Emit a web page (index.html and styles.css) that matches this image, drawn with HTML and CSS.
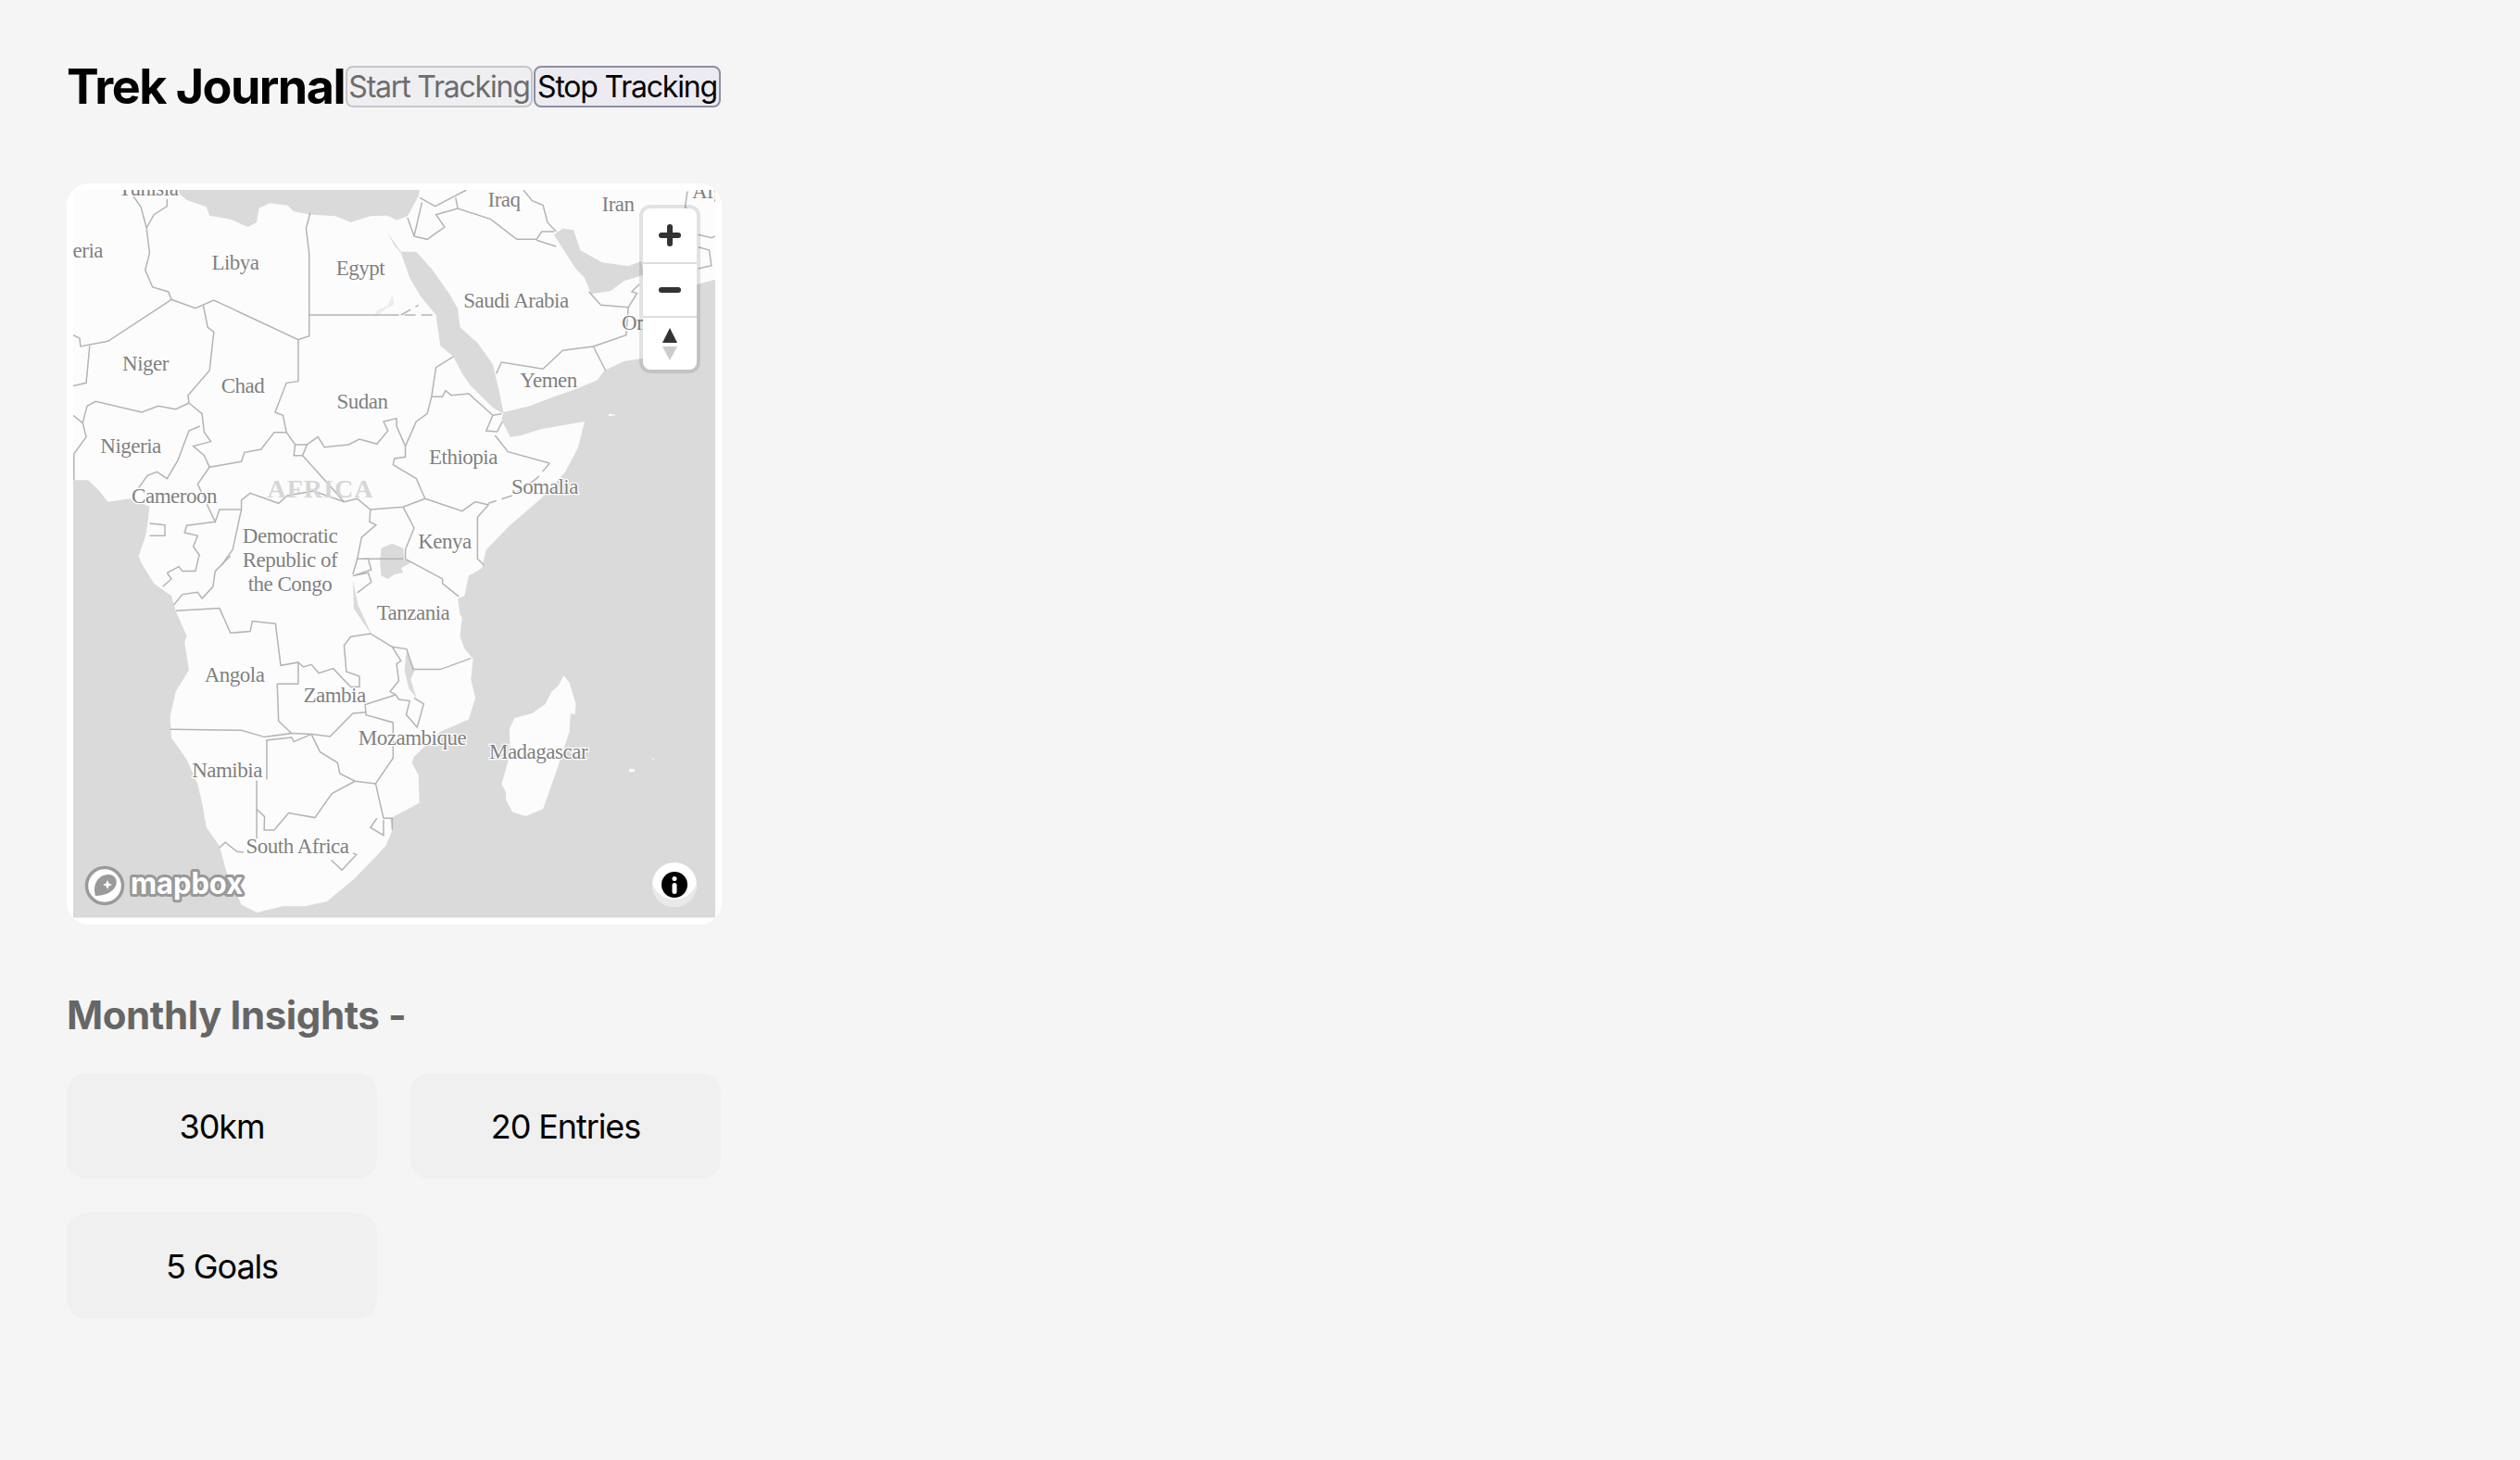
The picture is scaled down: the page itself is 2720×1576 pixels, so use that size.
FILE: index.html
```html
<!DOCTYPE html>
<html lang="en">
<head>
<meta charset="utf-8">
<title>Trek Journal</title>
<link rel="stylesheet" href="styles.css">
</head>
<body>
<main class="page">
  <header class="header">
    <h1 class="title">Trek Journal</h1>
    <button class="track-btn" disabled>Start Tracking</button>
    <button class="track-btn">Stop Tracking</button>
  </header>

  <section class="map-card">
    <div class="map">
      <svg class="map-svg" viewBox="79 205 693 786" width="693" height="786">
        <rect class="land" x="79" y="205" width="693" height="786"/>
        <g transform="translate(60,190) scale(.4719,.3333)">
          <path class="water" d="M280 45L285 60 300 78 345 100 352 128 400 140 440 165 460 150 465 105 490 88 530 95 545 115 585 125 640 130 675 150 720 130 760 128 780 143 805 130 830 65 833 45Z"/>
          <path class="water" d="M760 185L790 245 825 245 860 300 900 380 920 430 925 490 965 540 1000 610 1005 640 1015 700 1025 770 1000 750 950 680 930 640 910 585 880 550 870 450 835 390 810 330 790 250 775 225Z"/>
          <path class="water" d="M1140 190L1160 170 1185 175 1200 240 1250 280 1310 292 1340 275 1345 320 1300 340 1270 372 1225 382 1210 330 1190 300 1185 290Z"/>
          <path class="water" d="M1509 335L1470 350 1400 360 1345 590 1300 600 1255 630 1240 660 1190 690 1130 720 1085 745 1025 765 1020 790 1040 845 1065 840 1110 820 1170 805 1210 795 1195 880 1165 960 1110 1045 1040 1130 985 1210 975 1270 945 1295 935 1360 920 1370 925 1420 930 1430 925 1490 935 1530 955 1565 950 1630 960 1690 945 1760 880 1800 820 1880 815 1900 830 1940 832 2030 800 2055 765 2080 770 2120 755 2170 725 2215 680 2280 620 2350 570 2365 520 2365 460 2385 425 2360 390 2250 375 2170 345 2110 335 2030 325 1970 300 1890 265 1820 262 1750 275 1670 305 1600 295 1510 300 1490 275 1410 265 1360 225 1320 195 1250 190 1230 205 1170 210 1130 215 1070 170 1045 120 1055 100 1020 75 985 40 985 40 2402 1509 2402Z"/>
          <path class="water" d="M745 1205L770 1190 795 1205 797 1240 815 1250 790 1270 795 1285 775 1290 760 1305 745 1295 742 1250Z"/>
          <path class="water" d="M680 1310L692 1390 724 1488 705 1450 682 1400Z"/>
          <path class="water" d="M803 1535L822 1600 812 1630 826 1692 808 1660 798 1600Z"/>
          <path class="lake" d="M770 385L775 415 755 430 730 460 735 435 760 420Z"/>
          <path class="land" d="M1162 1618L1175 1640 1190 1710 1188 1745 1178 1740 1175 1800 1145 1930 1115 2050 1075 2073 1045 2060 1030 2020 1030 1995 1020 1970 1040 1870 1038 1790 1050 1755 1090 1740 1120 1710 1135 1670 1150 1650Z"/>
          <path class="land" d="M1312 1920h12v10h-12zM1364 1890l6 -8 -2 10zM1265 770l20 4 -20 4z"/>

          <g class="borders">
            <path d="M175 60L195 100 208 168 215 250 205 305 222 360 258 375 265 400 320 428 362 402 555 530 580 518 580 250 573 170 582 120"/>
            <path d="M255 75V98L225 125 208 168"/>
            <path d="M580 450H760"/>
            <path class="dash" d="M760 450H870M790 450L830 418"/>
            <path d="M265 400L120 535 57 552 55 525 40 515M78 550L70 670 40 680"/>
            <path d="M338 420L348 490 362 505 352 630 303 710 305 735 275 755 235 745 197 765 92 730 72 745 62 800 70 845 42 900V985M40 775L62 800"/>
            <path d="M555 530V665L528 670 502 765 520 775 528 830 500 830 470 885 432 895 425 925 352 943 340 905 315 875 355 860 340 830 335 770 305 735"/>
            <path d="M330 810L305 825 280 920 255 980 232 958 210 970 190 1010"/>
            <path d="M352 943L325 998 345 1060 365 1120 375 1080H425V1050L445 1027 510 1060 530 1035 590 1020 660 1055 690 1045 720 1080 795 1072 845 1045"/>
            <path d="M528 830L548 870 545 905H565L575 870 548 870M565 905L660 1055"/>
            <path d="M575 870L600 845 615 878 670 870 695 852 735 868 760 825 750 795 780 785 780 810 800 875V910L775 915 772 935 825 980 845 1045"/>
            <path d="M800 875L825 795 850 770 860 715H885L892 695 905 710 945 705 1000 775 1020 770M910 585L870 620 860 715"/>
            <path d="M1000 775L985 825 1010 828 1022 795M1005 840L1035 893 1130 930"/>
            <path class="dash" d="M1130 930L1100 980 1045 1035 990 1060"/>
            <path d="M845 1045L930 1085 960 1055 990 1065 965 1105V1240L980 1260"/>
            <path d="M795 1072L820 1140 800 1210V1240M720 1080L718 1120 733 1130 700 1170 690 1240"/>
            <path d="M215 1125L250 1130V1165H215M365 1120L300 1132 295 1155 325 1165 315 1200 330 1230"/>
            <path d="M425 1080L405 1210 380 1260"/>
            <path d="M705 1240H795"/>
            <path d="M833 70L868 98 940 45M838 85L820 195 850 205 890 165 870 125 920 105 995 140 1055 205H1100L1112 180H1140M1100 208L1145 228M920 105L915 70M1070 45L1090 80 1115 95 1125 150 1145 180"/>
            <path d="M805 135L820 195M1220 375L1247 418 1310 425 1330 380 1318 375 1335 350M1310 425L1305 515 1230 552 1160 565 1115 625 1020 603 1008 640M1230 552L1258 630"/>
            <path d="M1445 50L1440 100 1465 140M1470 190L1500 200 1509 195M1470 230L1495 240 1500 290 1470 300"/>
            <g transform="translate(0,1230)">
              <path d="M800 10L885 75V90L922 132M690 10H715L722 45 680 65 715 55 722 85 690 120M690 10L680 60"/>
              <path d="M400 0L365 50 360 100 335 138 325 118 290 125 270 160M255 55L282 35 290 50H320L328 0M245 100L265 75 255 55"/>
              <path d="M275 178L375 170 400 250 445 245 450 212 503 220 515 355 555 345V415H507L510 535 540 575 478 587 425 565 262 562"/>
              <path d="M555 345L567 360 585 352 602 380 635 365 675 425H695V390L665 375 660 290 675 262 720 252 770 295 790 340 780 350 785 405 765 440 778 450 785 465 810 470 802 515 827 555 842 480 820 460"/>
              <path d="M770 295L803 302 818 368H880L950 332"/>
              <path d="M778 450L708 482 710 515 772 540V655L732 738 685 730 650 705 645 670 605 635 585 578"/>
              <path d="M708 507L680 510 628 585 585 578 540 575M483 725V597L540 588 545 602 585 578M460 728V915"/>
              <path d="M685 730L632 770 593 848 533 833 500 888H477L478 845 460 820M732 738L750 850H770V888M735 850L720 880 750 905V855"/>
              <path d="M630 985L655 1018 688 968 680 963M375 945L388 928 415 958 430 960"/>
            </g>
          </g>
        </g>

        <text class="place" x="160" y="211" text-anchor="middle">Tunisia</text>
        <text class="place" x="111" y="278" text-anchor="end">Algeria</text>
        <text class="place" x="254" y="291" text-anchor="middle">Libya</text>
        <text class="place" x="389" y="297" text-anchor="middle">Egypt</text>
        <text class="place" x="557" y="332" text-anchor="middle">Saudi Arabia</text>
        <text class="place" x="544" y="223" text-anchor="middle">Iraq</text>
        <text class="place" x="667" y="228" text-anchor="middle">Iran</text>
        <text class="place" x="747" y="214">Afghanistan</text>
        <text class="place" x="671" y="356">Oman</text>
        <text class="place" x="157" y="400" text-anchor="middle">Niger</text>
        <text class="place" x="262" y="424" text-anchor="middle">Chad</text>
        <text class="place" x="391" y="441" text-anchor="middle">Sudan</text>
        <text class="place" x="592" y="418" text-anchor="middle">Yemen</text>
        <text class="place" x="141" y="489" text-anchor="middle">Nigeria</text>
        <text class="place" x="500" y="501" text-anchor="middle">Ethiopia</text>
        <text class="place" x="588" y="533" text-anchor="middle">Somalia</text>
        <text class="place" x="188" y="543" text-anchor="middle">Cameroon</text>
        <text class="continent" x="346" y="537" text-anchor="middle">AFRICA</text>
        <text class="place" x="313" y="586" text-anchor="middle">Democratic</text>
        <text class="place" x="313" y="612" text-anchor="middle">Republic of</text>
        <text class="place" x="313" y="638" text-anchor="middle">the Congo</text>
        <text class="place" x="480" y="592" text-anchor="middle">Kenya</text>
        <text class="place" x="446" y="669" text-anchor="middle">Tanzania</text>
        <text class="place" x="253" y="736" text-anchor="middle">Angola</text>
        <text class="place" x="361" y="758" text-anchor="middle">Zambia</text>
        <text class="place" x="445" y="804" text-anchor="middle">Mozambique</text>
        <text class="place" x="581" y="819" text-anchor="middle">Madagascar</text>
        <text class="place" x="245" y="839" text-anchor="middle">Namibia</text>
        <text class="place" x="321" y="921" text-anchor="middle">South Africa</text>

        <circle class="logo-ring" cx="113" cy="956" r="19.5"/>
        <path class="logo-pin" d="M117 944C125 944 127 951 125 956 122 963 113 967 103 967 101 960 102 955 105 950 108 946 112 944 117 944Z"/>
        <path class="logo-star" d="M116 950L117.500 953.500 121 955 117.500 956.500 116 960 114.500 956.500 111 955 114.500 953.500Z"/>
        <text class="logo-word" x="141" y="965" textLength="121" lengthAdjust="spacingAndGlyphs">mapbox</text>
      </svg>

      <div class="nav">
        <div class="nav-btn">
          <svg class="nav-icon" viewBox="0 0 24 24" width="24" height="24"><path class="nav-stroke" d="M3 12H21M12 3V21"/></svg>
        </div>
        <div class="nav-btn">
          <svg class="nav-icon" viewBox="0 0 24 24" width="24" height="24"><path class="nav-stroke" d="M3 12H21"/></svg>
        </div>
        <div class="nav-btn">
          <svg class="nav-icon" viewBox="0 0 16 35" width="16" height="35"><path class="compass-n" d="M8 0L16 16H0Z"/><path class="compass-s" d="M0 20H16L8 35Z"/></svg>
        </div>
      </div>

      <div class="info">
        <svg viewBox="0 0 28 28" width="28" height="28"><circle cx="14" cy="14" r="14"/><circle class="info-mark" cx="14" cy="7.500" r="2.500"/><rect class="info-mark" x="11.500" y="12" width="5" height="12" rx="2.500"/></svg>
      </div>
    </div>
  </section>

  <h2 class="insights-title">Monthly Insights -</h2>
  <section class="stats">
    <div class="stat">30km</div>
    <div class="stat">20 Entries</div>
    <div class="stat">5 Goals</div>
  </section>
</main>
</body>
</html>
```

FILE: styles.css
```css
* { box-sizing: border-box; }
html, body { margin: 0; height: 100%; }
body {
  background: #f5f5f5;
  color: #000;
  font-family: Inter, "Liberation Sans", sans-serif;
  overflow: hidden;
}
.page { width: 850px; padding: 71px 72px 0; }
.header { display: flex; align-items: center; width: 708px; }
.title { margin: 0; font-size: 52px; line-height: 45px; font-weight: 700; letter-spacing: -1.5px; white-space: nowrap; }
.track-btn {
  flex: none;
  width: 202px;
  height: 45px;
  padding: 0;
  margin-left: 1px;
  font-family: Inter, "Liberation Sans", sans-serif;
  font-size: 32px;
  line-height: 1;
  letter-spacing: -1.2px;
  color: #000;
  background: #ecebf1;
  border: 2px solid #8f8ea2;
  border-radius: 8px;
  white-space: nowrap;
}
.track-btn:disabled { color: #6d6d6d; background: #efeff2; border-color: #c6c6cc; }

.map-card { width: 707px; height: 800px; margin-top: 82px; padding: 7px 6px 7px 7px; background: #fff; border-radius: 24px; }
.map { position: relative; width: 693px; height: 786px; overflow: hidden; }
.map-svg { display: block; }
.land { fill: #fcfcfc; }
.water { fill: #dadada; }
.lake { fill: #ececec; }
.borders path { fill: none; stroke: #b4b4b4; stroke-width: 1.5px; vector-effect: non-scaling-stroke; }
.borders path.dash { stroke-dasharray: 12 6; }
.place {
  font-family: "Liberation Serif", serif;
  font-size: 23px;
  letter-spacing: -0.5px;
  fill: #808080;
  stroke: #fff;
  stroke-width: 2.5px;
  paint-order: stroke;
}
.continent {
  font-family: "Liberation Serif", serif;
  font-size: 28px;
  font-weight: 700;
  letter-spacing: 1px;
  fill: #d6d6d6;
}
.logo-ring { fill: #fff; stroke: #9a9a9a; stroke-width: 3.5px; }
.logo-pin { fill: #9a9a9a; }
.logo-star { fill: #fff; }
.logo-word {
  font-family: Inter, sans-serif;
  font-size: 32px;
  font-weight: 700;
  fill: #fff;
  stroke: #999;
  stroke-width: 6px;
  stroke-linejoin: round;
  paint-order: stroke;
}

.nav {
  position: absolute;
  left: 615px;
  top: 20px;
  width: 58px;
  background: #fff;
  border-radius: 8px;
  box-shadow: 0 0 0 4px rgba(0, 0, 0, .1);
}
.nav-btn { display: flex; align-items: center; justify-content: center; height: 58px; border-top: 2px solid #ddd; }
.nav-btn:first-child { border-top: 0; }
.nav-icon { display: block; }
.nav-stroke { fill: none; stroke: #333; stroke-width: 6px; stroke-linecap: round; }
.compass-n { fill: #333; }
.compass-s { fill: #ccc; }

.info {
  position: absolute;
  left: 625px;
  top: 726px;
  display: flex;
  justify-content: center;
  width: 48px;
  height: 48px;
  padding-top: 10px;
  background: #fff;
  border-radius: 50%;
  box-shadow: inset 0 -9px 0 -1px #e9e9e9;
}
.info svg { display: block; }
.info-mark { fill: #fff; }

.insights-title { margin: 73px 0 0; font-size: 42px; line-height: 50px; font-weight: 700; color: #666; letter-spacing: -0.4px; }
.stats { display: grid; grid-template-columns: 335px 335px; gap: 36px; width: 707px; margin-top: 37px; }
.stat { display: flex; align-items: center; justify-content: center; height: 115px; font-size: 36px; letter-spacing: -1.1px; background: #f0f0f0; border-radius: 22px; }
```
